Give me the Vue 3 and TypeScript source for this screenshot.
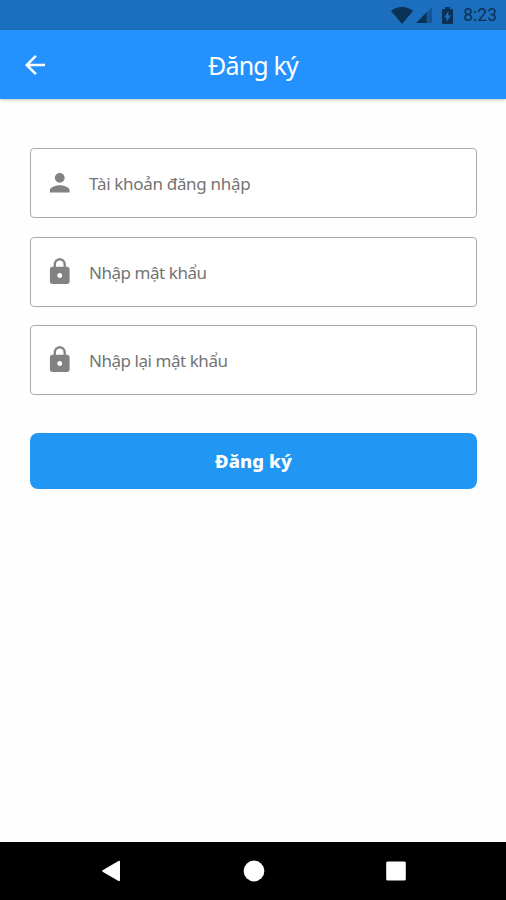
<script setup lang="ts">
import { ref } from 'vue'

interface Field {
  id: string
  label: string
  icon: 'person' | 'lock'
  type: string
}

const icons: Record<Field['icon'], string> = {
  person:
    'M12 12c2.21 0 4-1.79 4-4s-1.79-4-4-4-4 1.79-4 4 1.79 4 4 4zm0 2c-2.67 0-8 1.34-8 4v2h16v-2c0-2.66-5.33-4-8-4z',
  lock:
    'M18 8h-1V6c0-2.76-2.24-5-5-5S7 3.24 7 6v2H6c-1.1 0-2 .9-2 2v10c0 1.1.9 2 2 2h12c1.1 0 2-.9 2-2V10c0-1.1-.9-2-2-2zm-6 9c-1.1 0-2-.9-2-2s.9-2 2-2 2 .9 2 2-.9 2-2 2zm3.1-9H8.9V6c0-1.71 1.39-3.1 3.1-3.1 1.71 0 3.1 1.39 3.1 3.1v2z',
}

const fields: Field[] = [
  { id: 'account', label: 'Tài khoản đăng nhập', icon: 'person', type: 'text' },
  { id: 'password', label: 'Nhập mật khẩu', icon: 'lock', type: 'password' },
  { id: 'confirm', label: 'Nhập lại mật khẩu', icon: 'lock', type: 'password' },
]

const values = ref<Record<string, string>>({ account: '', password: '', confirm: '' })
</script>

<template>
  <div class="screen">
    <div class="status">
      <svg class="wifi" viewBox="0 0 22 17"><path d="M0 4C6-1.2 16-1.2 22 4L11 17z" /></svg>
      <svg class="signal" viewBox="0 0 16 16">
        <path d="M0 16L16 0v16z" opacity=".4" />
        <path d="M0 16L10.5 5.5V16z" />
      </svg>
      <svg class="battery" viewBox="0 0 11 17">
        <path
          fill-rule="evenodd"
          d="M3 0h5v2h2q1 0 1 1v13q0 1-1 1H1q-1 0-1-1V3q0-1 1-1h2zM6.3 4.2L2.1 10.4h2.5v4.4L8.9 8.4H6.3z"
        />
      </svg>
      <span class="clock">8:23</span>
    </div>

    <header class="appbar">
      <button class="back" type="button">
        <svg viewBox="0 0 24 24"><path d="M20 11H7.83l5.59-5.59L12 4l-8 8 8 8 1.41-1.41L7.83 13H20v-2z" /></svg>
      </button>
      <h1 class="title">Đăng ký</h1>
    </header>

    <form class="form" @submit.prevent>
      <label v-for="field in fields" :key="field.id" class="field">
        <svg class="icon" viewBox="0 0 24 24"><path :d="icons[field.icon]" /></svg>
        <input v-model="values[field.id]" :class="['input', field.id]" :type="field.type" :placeholder="field.label" />
      </label>
      <button class="submit" type="submit">Đăng ký</button>
    </form>

    <nav class="navbar">
      <svg viewBox="0 0 24 24"><path d="M3.6 11.2L19.5 2q1.5-.6 1.5 1v18q0 1.6-1.5 1L3.6 12.8q-1-.8 0-1.6z" /></svg>
      <svg viewBox="0 0 24 24"><circle cx="12" cy="12" r="10.4" /></svg>
      <svg viewBox="0 0 24 24"><rect x="2.2" y="2.6" width="19.6" height="19" rx="1.5" /></svg>
    </nav>
  </div>
</template>

<style>
body {
  margin: 0;
  background: #fff;
}
</style>

<style scoped>
.screen {
  display: flex;
  flex-direction: column;
  height: 900px;
  background: #fefefe;
  font-family: 'Noto Sans', 'Open Sans', sans-serif;
}

.status {
  display: flex;
  align-items: center;
  justify-content: flex-end;
  box-sizing: border-box;
  height: 30px;
  padding-right: 9px;
  background: #1c6fbf;
  color: #0b3155;
}

.status svg {
  fill: #0b3155;
}

.wifi {
  width: 22px;
  height: 17px;
  margin-right: 3px;
}

.signal {
  width: 16px;
  height: 16px;
  margin-right: 10px;
}

.battery {
  width: 11px;
  height: 17px;
  margin-right: 10px;
}

.clock {
  padding-top: 1px;
  font-family: Roboto, sans-serif;
  font-size: 17.5px;
  line-height: 29px;
}

.appbar {
  position: relative;
  display: grid;
  grid-template-columns: 70px 1fr 70px;
  align-items: center;
  height: 69px;
  background: #2492fe;
  box-shadow: 0 1px 3px rgba(70, 60, 40, 0.3);
}

.back {
  display: flex;
  justify-content: center;
  padding: 0;
  border: 0;
  background: none;
}

.back svg {
  width: 30px;
  height: 30px;
  fill: #fff;
}

.title {
  margin: 0;
  color: #fff;
  font-size: 25px;
  font-weight: 400;
  letter-spacing: -0.85px;
  line-height: 34px;
  text-align: center;
}

.form {
  display: flex;
  flex: 1;
  flex-direction: column;
  gap: 18.5px;
  padding: 49px 29px 0 30px;
}

.field {
  display: flex;
  align-items: center;
  box-sizing: border-box;
  height: 70px;
  padding: 0 16px 0 14px;
  border: 1px solid #aaa;
  border-radius: 4px;
  background: #fff;
}

.icon {
  flex: none;
  width: 29.5px;
  height: 29.5px;
  margin-right: 14.5px;
  fill: #828282;
}

.input {
  flex: 1;
  min-width: 0;
  height: 40px;
  padding: 1px 0 0;
  border: 0;
  outline: 0;
  background: none;
  color: #444;
  font-family: inherit;
  font-size: 17px;
  letter-spacing: -0.45px;
}

.input.account {
  letter-spacing: -0.32px;
}

.input::placeholder {
  color: #747474;
  opacity: 1;
}

.submit {
  height: 56px;
  margin-top: 19px;
  padding: 0;
  border: 0;
  border-radius: 8px;
  background: #2196f3;
  color: #fff;
  font-family: inherit;
  font-size: 18.5px;
  font-weight: 800;
  letter-spacing: 0.1px;
}

.navbar {
  display: flex;
  align-items: center;
  justify-content: space-between;
  box-sizing: border-box;
  height: 58px;
  padding: 0 98px 0 99px;
  background: #000;
}

.navbar svg {
  width: 24px;
  height: 24px;
  fill: #fff;
}
</style>
